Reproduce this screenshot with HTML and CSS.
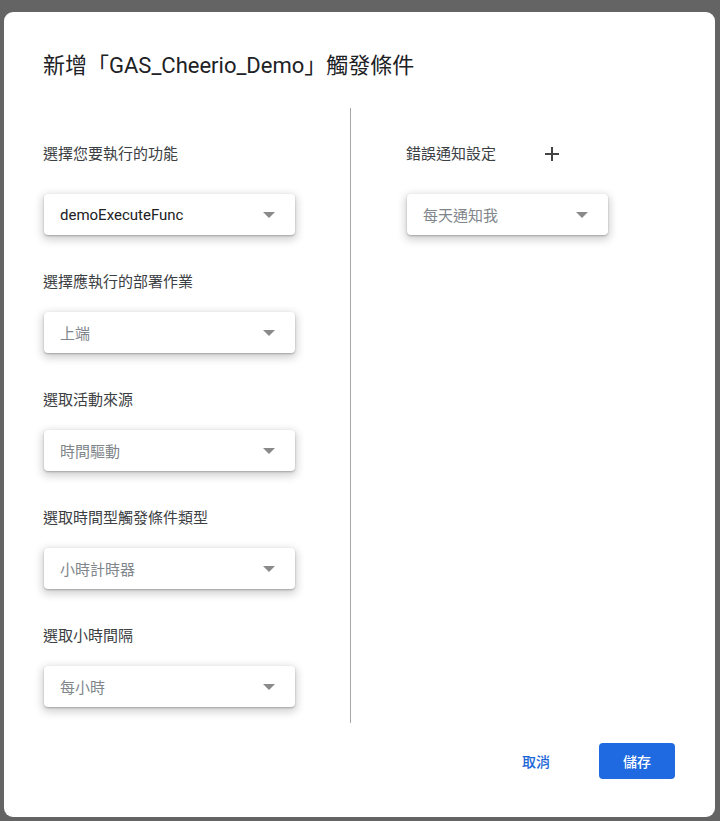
FILE: index.html
```html
<!DOCTYPE html>
<html lang="zh-Hant">
<head>
<meta charset="utf-8">
<title>新增觸發條件</title>
<link rel="stylesheet" href="styles.css">
</head>
<body>
<div class="dialog">
  <h1 class="title">新增「GAS_Cheerio_Demo」觸發條件</h1>
  <div class="content">
    <div class="col col-left">
      <div class="field first">
        <div class="label">選擇您要執行的功能</div>
        <div class="select"><span class="value dark">demoExecuteFunc</span><span class="arrow"></span></div>
      </div>
      <div class="field">
        <div class="label">選擇應執行的部署作業</div>
        <div class="select"><span class="value">上端</span><span class="arrow"></span></div>
      </div>
      <div class="field">
        <div class="label">選取活動來源</div>
        <div class="select"><span class="value">時間驅動</span><span class="arrow"></span></div>
      </div>
      <div class="field">
        <div class="label">選取時間型觸發條件類型</div>
        <div class="select"><span class="value">小時計時器</span><span class="arrow"></span></div>
      </div>
      <div class="field">
        <div class="label">選取小時間隔</div>
        <div class="select"><span class="value">每小時</span><span class="arrow"></span></div>
      </div>
    </div>
    <div class="col col-right">
      <div class="field first">
        <div class="label label-row">錯誤通知設定
          <svg class="plus" width="16" height="16" viewBox="0 0 16 16"><path d="M8 1v14M1 8h14" stroke="#444" stroke-width="2" fill="none"/></svg>
        </div>
        <div class="select small"><span class="value">每天通知我</span><span class="arrow"></span></div>
      </div>
    </div>
  </div>
  <div class="actions">
    <button class="btn btn-text">取消</button>
    <button class="btn btn-primary">儲存</button>
  </div>
</div>
</body>
</html>
```
FILE: styles.css
```css
html, body {
  margin: 0;
  padding: 0;
  height: 100%;
}
body {
  background: #646464;
  font-family: Roboto, "Noto Sans CJK TC", "Noto Sans", sans-serif;
  overflow: hidden;
  padding-top: 12px;
  box-sizing: border-box;
}
.dialog {
  margin-left: 4px;
  width: 711px;
  height: 805px;
  background: #fff;
  border-radius: 9px;
  box-sizing: border-box;
  padding: 40px 40px 0 39px;
  display: flex;
  flex-direction: column;
}
.title {
  margin: 0;
  font-size: 22px;
  font-weight: 400;
  line-height: 28px;
  color: #202124;
}
.content {
  display: flex;
  margin-top: 28px;
}
.col-left {
  width: 307px;
  border-right: 1px solid #a8a8a8;
  padding-top: 36px;
  padding-bottom: 16px;
}
.col-right {
  padding-left: 55px;
  padding-top: 36px;
}
.field {
  display: flex;
  flex-direction: column;
}
.field + .field {
  margin-top: 37px;
}
.label {
  font-size: 15px;
  line-height: 20px;
  color: #3c4043;
  margin-bottom: 20px;
}
.field.first .label {
  margin-bottom: 30px;
}
.label-row {
  display: flex;
  align-items: center;
  gap: 48px;
}
.plus {
  display: block;
}
.select {
  width: 251px;
  height: 41px;
  margin-left: 1px;
  border-radius: 4px;
  background: #fff;
  box-shadow: 0 1px 2px rgba(0,0,0,0.25), 0 3px 8px 2px rgba(0,0,0,0.18);
  display: flex;
  align-items: center;
  padding: 0 20px 0 16px;
  box-sizing: border-box;
}
.select.small {
  width: 201px;
}
.value {
  flex: 1;
  font-size: 15px;
  color: #80868b;
}
.value.dark {
  color: #202124;
}
.arrow {
  width: 0;
  height: 0;
  border-left: 6px solid transparent;
  border-right: 6px solid transparent;
  border-top: 6px solid #8a8a8a;
  margin-top: 1px;
}
.actions {
  display: flex;
  justify-content: flex-end;
  align-items: center;
  gap: 35px;
  margin-top: 20px;
}
.btn {
  font-family: Roboto, "Noto Sans CJK TC", sans-serif;
  font-size: 14px;
  font-weight: 500;
  height: 36px;
  border: none;
  border-radius: 4px;
  cursor: pointer;
}
.btn-text {
  background: transparent;
  color: #1a66d6;
  padding: 0 14px;
}
.btn-primary {
  background: #1f6ae0;
  color: #fff;
  width: 76px;
}
```
